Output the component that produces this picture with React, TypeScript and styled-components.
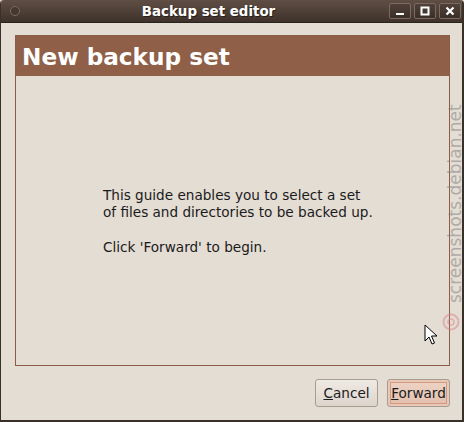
import React from "react";
import styled, { createGlobalStyle } from "styled-components";

const Global = createGlobalStyle`
  html, body {
    margin: 0;
    padding: 0;
    background: #e4ddd4;
  }
  body {
    font-family: "DejaVu Sans", "Liberation Sans", sans-serif;
  }
`;

const Window = styled.div`
  position: relative;
  width: 464px;
  height: 422px;
  box-sizing: border-box;
  display: flex;
  flex-direction: column;
  background: #e4ddd4;
  border-left: 1px solid #3a302a;
  border-right: 2px solid #3a302a;
  border-bottom: 2px solid #3a302a;
  border-radius: 4px 4px 0 0;
  overflow: hidden;
`;

const TitleBar = styled.div`
  height: 22px;
  flex-shrink: 0;
  display: flex;
  align-items: center;
  padding: 0 1px 0 9px;
  background: linear-gradient(#5f4e44, #3e322b);
  border-bottom: 1px solid #2a221d;
`;

const MenuDot = styled.div`
  width: 8px;
  height: 8px;
  border-radius: 50%;
  border: 1px solid #7b6b60;
  background: #44382f;
`;

const Title = styled.div`
  flex: 1;
  text-align: center;
  color: #ffffff;
  font-weight: bold;
  font-size: 13.4px;
  text-shadow: 1px 1px 0 #2a201a;
  padding-left: 8px;
`;

const Controls = styled.div`
  display: flex;
  gap: 3px;
`;

const CtlButton = styled.div`
  width: 22px;
  height: 16px;
  box-sizing: border-box;
  border: 1px solid #7a6a5f;
  border-radius: 2px;
  background: linear-gradient(#4f4139, #3a2f28);
  display: flex;
  align-items: center;
  justify-content: center;
`;

const Body = styled.div`
  flex: 1;
  display: flex;
  flex-direction: column;
  padding: 12px 12px 0 14px;
`;

const Panel = styled.div`
  height: 331px;
  display: flex;
  flex-direction: column;
  box-sizing: border-box;
  border: 1px solid #8b5c47;
`;

const Header = styled.div`
  height: 40px;
  flex-shrink: 0;
  background: #8f5f48;
  color: #ffffff;
  font-weight: bold;
  font-size: 23.2px;
  display: flex;
  align-items: center;
  padding-left: 6px;
`;

const Content = styled.div`
  flex: 1;
  display: flex;
  align-items: center;
  padding-left: 87px;
  padding-top: 2px;
`;

const Text = styled.p`
  margin: 0;
  font-size: 13.6px;
  line-height: 17.5px;
  color: #1a1a1a;
`;

const Actions = styled.div`
  display: flex;
  justify-content: flex-end;
  gap: 9px;
  padding: 13px 0 0;
`;

const Button = styled.button<{ $focus?: boolean }>`
  height: 28px;
  width: 63px;
  box-sizing: border-box;
  padding: 0;
  font-family: "DejaVu Sans", "Liberation Sans", sans-serif;
  font-size: 13.6px;
  color: #1a1a1a;
  border: 1px solid #a89c90;
  border-radius: 3px;
  background: ${(p) =>
    p.$focus
      ? "linear-gradient(#edd4c6, #e2bfae)"
      : "linear-gradient(#efeae4, #ddd5cc)"};
  box-shadow: ${(p) => (p.$focus ? "inset 0 0 0 2px #e9c8b8, inset 0 0 0 3px #d49a80" : "none")};
  u {
    text-decoration: underline;
  }
`;

const Watermark = styled.div`
  position: absolute;
  left: 447px;
  top: 303px;
  transform: rotate(-90deg);
  transform-origin: 0 0;
  font-family: "DejaVu Sans", sans-serif;
  font-size: 17px;
  line-height: 15px;
  color: rgba(120, 120, 120, 0.5);
  white-space: nowrap;
`;

const Logo = styled.svg`
  position: absolute;
  left: 441px;
  top: 313px;
`;

const Cursor = styled.svg`
  position: absolute;
  left: 423px;
  top: 324px;
`;

export default function App() {
  return (
    <>
      <Global />
      <Window>
        <TitleBar>
          <MenuDot />
          <Title>Backup set editor</Title>
          <Controls>
            <CtlButton>
              <svg width="10" height="10" viewBox="0 0 10 10">
                <rect x="1" y="7" width="8" height="2" fill="#fff" />
              </svg>
            </CtlButton>
            <CtlButton>
              <svg width="10" height="10" viewBox="0 0 10 10">
                <rect x="1.5" y="1.5" width="7" height="7" fill="none" stroke="#fff" strokeWidth="2" />
              </svg>
            </CtlButton>
            <CtlButton>
              <svg width="10" height="10" viewBox="0 0 10 10">
                <path d="M1.5 1.5 L8.5 8.5 M8.5 1.5 L1.5 8.5" stroke="#fff" strokeWidth="2.2" />
              </svg>
            </CtlButton>
          </Controls>
        </TitleBar>
        <Body>
          <Panel>
            <Header>New backup set</Header>
            <Content>
              <Text>
                This guide enables you to select a set
                <br />
                of files and directories to be backed up.
                <br />
                <br />
                Click 'Forward' to begin.
              </Text>
            </Content>
          </Panel>
          <Actions>
            <Button>
              <u>C</u>ancel
            </Button>
            <Button $focus>
              <u>F</u>orward
            </Button>
          </Actions>
        </Body>
        <Watermark>screenshots.debian.net</Watermark>
        <Logo width="18" height="18" viewBox="0 0 18 18">
          <circle cx="9" cy="9" r="7.5" fill="none" stroke="rgba(220,120,130,0.45)" strokeWidth="2" />
          <circle cx="9" cy="9" r="3" fill="none" stroke="rgba(220,120,130,0.45)" strokeWidth="1.5" />
        </Logo>
        <Cursor width="14" height="22" viewBox="0 0 14 22">
          <path d="M1 1 L1 17 L5 13 L8 20 L10.5 19 L7.5 12 L13 12 Z" fill="#fff" stroke="#000" strokeWidth="1" strokeLinejoin="round" />
        </Cursor>
      </Window>
    </>
  );
}
